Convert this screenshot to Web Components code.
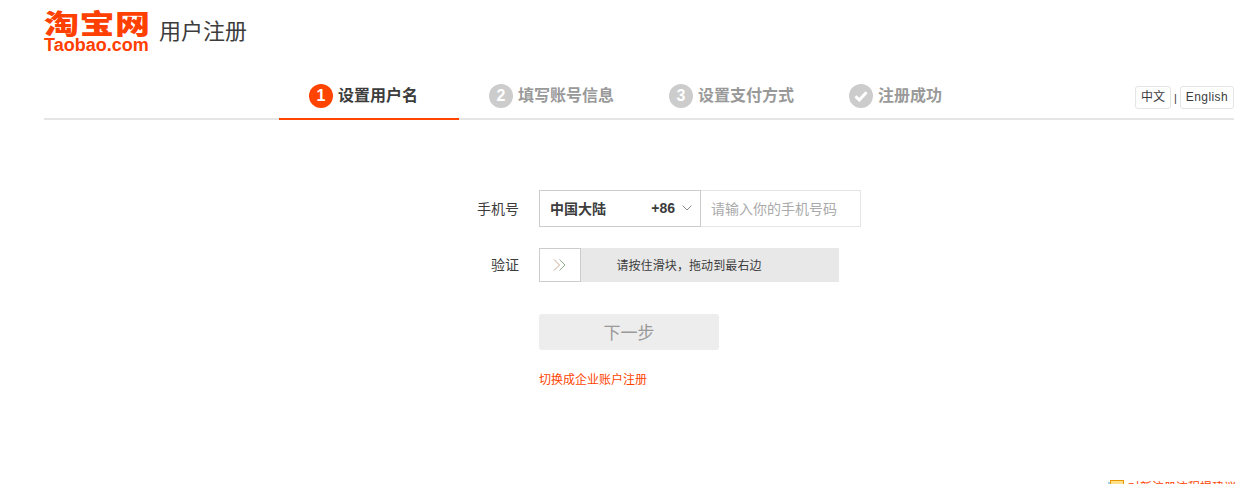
<!DOCTYPE html>
<html lang="zh-CN">
<head>
<meta charset="utf-8">
<title>用户注册</title>
<style>
  html, body { margin: 0; height: 484px; overflow: hidden; background: #fff; }
  body { font-family: "Liberation Sans", "Noto Sans CJK SC", sans-serif; color: #3c3c3c; }
</style>
</head>
<body>
<tb-page>
  <tb-header title-text="用户注册"></tb-header>
  <tb-nav>
    <tb-step num="1" active>设置用户名</tb-step>
    <tb-step num="2">填写账号信息</tb-step>
    <tb-step num="3">设置支付方式</tb-step>
    <tb-step done>注册成功</tb-step>
    <tb-lang slot="lang"></tb-lang>
  </tb-nav>
  <tb-form>
    <tb-row label="手机号" after="21"><tb-phone></tb-phone></tb-row>
    <tb-row label="验证" after="32"><tb-slider>请按住滑块，拖动到最右边</tb-slider></tb-row>
    <tb-row after="19"><tb-next>下一步</tb-next></tb-row>
    <tb-row><tb-switch>切换成企业账户注册</tb-switch></tb-row>
  </tb-form>
  <tb-feedback>对新注册流程提建议</tb-feedback>
</tb-page>

<script>
'use strict';

const CJK = `"Noto Sans CJK SC", sans-serif`;

class TbPage extends HTMLElement {
  constructor() {
    super();
    this.attachShadow({ mode: 'open' }).innerHTML = `
      <style>
        :host { display: flex; flex-direction: column; width: 1251px; height: 484px; overflow: hidden; }
      </style>
      <slot></slot>`;
  }
}

class TbHeader extends HTMLElement {
  constructor() {
    super();
    this.attachShadow({ mode: 'open' }).innerHTML = `
      <style>
        :host { display: flex; align-items: flex-start; height: 73px; padding: 0 0 0 44px; }
        .logo { display: flex; flex-direction: column; width: 106px; color: #ff4000; margin-top: 10px; }
        .cn { display: block; font: 900 35px/27px ${CJK}; letter-spacing: .5px; white-space: nowrap; height: 27px; transform: translateY(-2px) scaleY(.78); }
        .en { font: 700 18px/15px "Liberation Sans", sans-serif; white-space: nowrap; margin-top: 1px; }
        h1 { margin: 14px 0 0 9px; font: 400 22px/30px ${CJK}; color: #3c3c3c; }
      </style>
      <div class="logo"><span class="cn">淘宝网</span><span class="en">Taobao.com</span></div>
      <h1>${this.getAttribute('title-text')}</h1>`;
  }
}

class TbNav extends HTMLElement {
  constructor() {
    super();
    this.attachShadow({ mode: 'open' }).innerHTML = `
      <style>
        :host { display: flex; align-items: flex-end; width: 1190px; height: 45px; margin-left: 44px; border-bottom: 2px solid #e5e5e5; }
        .steps { display: flex; margin-left: 235px; }
        .lang { margin-left: auto; align-self: flex-start; }
      </style>
      <div class="steps"><slot></slot></div>
      <div class="lang"><slot name="lang"></slot></div>`;
  }
}

class TbStep extends HTMLElement {
  constructor() {
    super();
    const mark = this.hasAttribute('done')
      ? `<svg width="14" height="12" viewBox="0 0 14 12"><path d="M1.500 6.200 5.300 10 12.500 2.200" fill="none" stroke="#fff" stroke-width="3"/></svg>`
      : this.getAttribute('num');
    this.attachShadow({ mode: 'open' }).innerHTML = `
      <style>
        :host { display: flex; align-items: center; gap: 5px; box-sizing: border-box; width: 180px; height: 45px; margin-bottom: -2px; padding: 0 0 2px 30px; border-bottom: 2px solid transparent; color: #999; font: 700 16px/24px ${CJK}; }
        :host([active]) { border-bottom-color: #ff4400; color: #3c3c3c; }
        .num { display: flex; align-items: center; justify-content: center; width: 24px; height: 24px; border-radius: 50%; background: #ccc; color: #fff; font: 700 16px/24px "Liberation Sans", sans-serif; }
        :host([active]) .num { background: #ff4400; }
        .txt { margin-top: -4px; }
      </style>
      <span class="num">${mark}</span><span class="txt"><slot></slot></span>`;
  }
}

class TbLang extends HTMLElement {
  constructor() {
    super();
    this.attachShadow({ mode: 'open' }).innerHTML = `
      <style>
        :host { display: flex; align-items: center; gap: 3px; margin-top: 13px; color: #3c3c3c; font: 12px/20px "Liberation Sans", ${CJK}; }
        a { box-sizing: border-box; height: 23px; padding: 0 5px; border: 1px solid #e5e5e5; border-radius: 3px; line-height: 21px; background: #fff; }
        a + i + a { letter-spacing: .4px; }
        i { font-style: normal; font-size: 11px; }
      </style>
      <a>中文</a><i>|</i><a>English</a>`;
  }
}

class TbForm extends HTMLElement {
  constructor() {
    super();
    this.attachShadow({ mode: 'open' }).innerHTML = `
      <style>
        :host { display: flex; flex-direction: column; padding-top: 70px; }
      </style>
      <slot></slot>`;
  }
}

class TbRow extends HTMLElement {
  constructor() {
    super();
    const label = this.getAttribute('label') || '';
    this.style.marginBottom = (this.getAttribute('after') || 0) + 'px';
    this.attachShadow({ mode: 'open' }).innerHTML = `
      <style>
        :host { display: grid; grid-template-columns: 475px auto; column-gap: 20px; align-items: center; padding-left: 44px; font: 14px/20px ${CJK}; }
        .label { text-align: right; color: #3c3c3c; margin-top: -2px; }
      </style>
      <span class="label">${label}</span><div><slot></slot></div>`;
  }
}

class TbPhone extends HTMLElement {
  constructor() {
    super();
    this.attachShadow({ mode: 'open' }).innerHTML = `
      <style>
        :host { display: flex; height: 37px; }
        .select { display: flex; align-items: center; box-sizing: border-box; width: 162px; padding: 0 8px 2px 10px; border: 1px solid #ccc; color: #3c3c3c; font: 700 14px/20px ${CJK}; }
        .code { margin-left: auto; margin-right: 7px; font-family: "Liberation Sans", sans-serif; }
        .input { display: flex; align-items: center; box-sizing: border-box; width: 160px; padding: 0 0 2px 10px; border: 1px solid #e5e5e5; border-left: 0; color: #aaa; font: 14px/20px ${CJK}; }
      </style>
      <div class="select">
        <span>中国大陆</span><span class="code">+86</span>
        <svg width="10" height="6" viewBox="0 0 10 6"><path d="M.5.5 5 5 9.500.5" fill="none" stroke="#888"/></svg>
      </div>
      <div class="input">请输入你的手机号码</div>`;
  }
}

class TbSlider extends HTMLElement {
  constructor() {
    super();
    this.attachShadow({ mode: 'open' }).innerHTML = `
      <style>
        :host { display: flex; width: 300px; height: 34px; background: #e8e8e8; color: #3c3c3c; font: 12px/34px ${CJK}; }
        .handle { display: flex; align-items: center; justify-content: center; box-sizing: border-box; width: 42px; padding-right: 2px; background: #fff; border: 1px solid #ccc; }
        .text { flex: 1; text-align: center; margin-left: -42px; letter-spacing: .1px; }
      </style>
      <div class="handle">
        <svg width="13" height="12" viewBox="0 0 13 12"><path d="M1 .5 6.500 6 1 11.500" fill="none" stroke="#c4a890"/><path d="M6.500.5 12 6 6.500 11.500" fill="none" stroke="#8fae8a"/></svg>
      </div>
      <div class="text"><slot></slot></div>`;
  }
}

class TbNext extends HTMLElement {
  constructor() {
    super();
    this.attachShadow({ mode: 'open' }).innerHTML = `
      <style>
        :host { display: flex; align-items: center; justify-content: center; width: 180px; height: 36px; border-radius: 3px; background: #ededed; color: #999; font: 17px/36px ${CJK}; }
      </style>
      <slot></slot>`;
  }
}

class TbSwitch extends HTMLElement {
  constructor() {
    super();
    this.attachShadow({ mode: 'open' }).innerHTML = `
      <style>
        :host { display: block; color: #ff4400; font: 12px/20px ${CJK}; }
      </style>
      <slot></slot>`;
  }
}

class TbFeedback extends HTMLElement {
  constructor() {
    super();
    this.attachShadow({ mode: 'open' }).innerHTML = `
      <style>
        :host { display: flex; align-items: flex-start; gap: 4px; margin-top: auto; margin-bottom: -12px; margin-left: 1108px; height: 16px; color: #ff4400; font: 12px/13px ${CJK}; white-space: nowrap; }
        svg { flex: none; }
      </style>
      <svg width="16" height="14" viewBox="0 0 16 14"><rect x="0" y="2" width="3" height="10" fill="#a8d0f0"/><rect x="2.500" y=".5" width="13" height="12" fill="#ffe08a" stroke="#e89a00"/></svg>
      <slot></slot>`;
  }
}

customElements.define('tb-page', TbPage);
customElements.define('tb-header', TbHeader);
customElements.define('tb-nav', TbNav);
customElements.define('tb-step', TbStep);
customElements.define('tb-lang', TbLang);
customElements.define('tb-form', TbForm);
customElements.define('tb-row', TbRow);
customElements.define('tb-phone', TbPhone);
customElements.define('tb-slider', TbSlider);
customElements.define('tb-next', TbNext);
customElements.define('tb-switch', TbSwitch);
customElements.define('tb-feedback', TbFeedback);
</script>
</body>
</html>
